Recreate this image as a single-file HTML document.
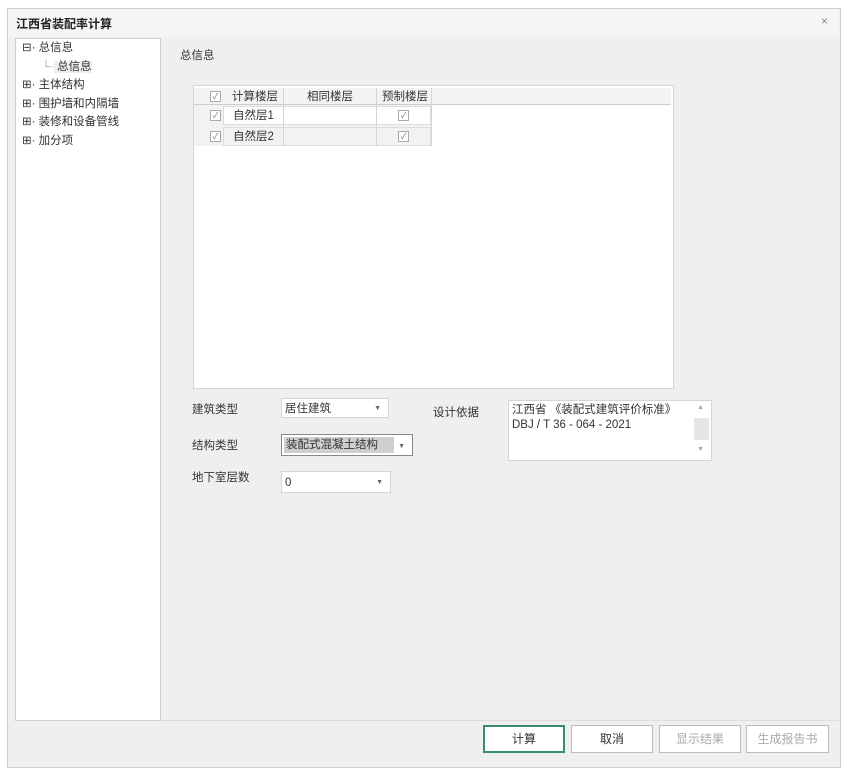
<!DOCTYPE html><html><head><meta charset="utf-8"><style>
body{margin:0;width:847px;height:774px;background:#fff;font-family:"Liberation Sans","Noto Sans CJK SC",sans-serif;font-size:11.5px;color:#333;position:relative;overflow:hidden}
.a{position:absolute}
.win{left:7px;top:8px;width:832px;height:758px;border:1px solid #cfcfcf;background:#efefef}
.cb{display:inline-block;width:9px;height:9px;border:1px solid #aaa;background:#fff;position:absolute;font-size:8px;line-height:9px;text-align:center;color:#777}
.btn{top:725px;height:26px;border:1px solid #bdbdbd;background:#fff;text-align:center;line-height:26px;font-size:12px}
.sel{background:#fff;border:1px solid #d5d5d5;height:20px;line-height:20px;padding-left:3px;box-sizing:border-box}
.arr{position:absolute;right:7px;top:0;font-size:7px;color:#666}
</style></head><body>
<div class="a win"></div>
<div class="a" style="left:8px;top:9px;width:831px;height:28px;background:#f5f5f5"></div>
<div class="a" style="left:16px;top:15px;font-weight:bold;font-size:12px;color:#222">江西省装配率计算</div>
<div class="a" style="left:821px;top:14px;color:#888;font-size:12px">×</div>
<div class="a" style="left:15px;top:38px;width:144px;height:681px;background:#fff;border:1px solid #d0d0d0"></div>
<div class="a" style="left:22px;top:39px;line-height:18.5px">
<div>⊟· 总信息</div><div style="padding-left:20px"><span style="color:#aaa">└·</span><span style="background:#eee"> 总信息</span></div>
<div>⊞· 主体结构</div><div>⊞· 围护墙和内隔墙</div><div>⊞· 装修和设备管线</div><div>⊞· 加分项</div></div>
<div class="a" style="left:180px;top:47px">总信息</div>
<div class="a" style="left:193px;top:85px;width:479px;height:302px;background:#fff;border:1px solid #d5d5d5"></div>
<div class="a" style="left:194px;top:88px;width:477px;height:16px;background:#f3f3f3;border-bottom:1px solid #ccc"></div>
<div class="a" style="left:194px;top:105px;width:237px;height:41px;background:#f2f2f2"></div>
<div class="a" style="left:223px;top:106px;width:208px;height:19px;background:#fff;border:1px solid #ddd;box-sizing:border-box"></div>
<div class="a" style="left:223px;top:127px;width:208px;height:19px;background:#f2f2f2;border:1px solid #ddd;box-sizing:border-box"></div>
<div class="a" style="left:283px;top:88px;width:1px;height:58px;background:#d5d5d5"></div>
<div class="a" style="left:376px;top:88px;width:1px;height:58px;background:#d5d5d5"></div>
<div class="a" style="left:431px;top:88px;width:1px;height:58px;background:#d5d5d5"></div>
<span class="cb" style="left:210px;top:91px">✓</span>
<div class="a" style="left:232px;top:88px">计算楼层</div>
<div class="a" style="left:307px;top:88px">相同楼层</div>
<div class="a" style="left:382px;top:88px">预制楼层</div>
<span class="cb" style="left:210px;top:110px">✓</span><div class="a" style="left:233px;top:107px">自然层1</div><span class="cb" style="left:398px;top:110px">✓</span>
<span class="cb" style="left:210px;top:131px">✓</span><div class="a" style="left:233px;top:128px">自然层2</div><span class="cb" style="left:398px;top:131px">✓</span>
<div class="a" style="left:192px;top:401px">建筑类型</div>
<div class="a sel" style="left:281px;top:398px;width:108px">居住建筑<span class="arr">▼</span></div>
<div class="a" style="left:192px;top:437px">结构类型</div>
<div class="a sel" style="left:281px;top:434px;width:132px;height:22px;border-color:#888;padding:2px"><div style="background:#cfcfcf;width:108px;height:16px;line-height:16px;padding-left:2px">装配式混凝土结构</div><span class="arr" style="top:2px">▼</span></div>
<div class="a" style="left:192px;top:469px">地下室层数</div>
<div class="a sel" style="left:281px;top:471px;width:110px;height:22px;line-height:22px">0<span class="arr">▼</span></div>
<div class="a" style="left:433px;top:404px">设计依据</div>
<div class="a" style="left:508px;top:400px;width:202px;height:59px;background:#fff;border:1px solid #d5d5d5"></div>
<div class="a" style="left:512px;top:403px;line-height:15px">江西省 《装配式建筑评价标准》<br>DBJ / T 36 - 064 - 2021</div>
<div class="a" style="left:694px;top:418px;width:15px;height:22px;background:#e6e6e6"></div>
<div class="a" style="left:697px;top:404px;font-size:7px;color:#aaa">▲</div>
<div class="a" style="left:697px;top:446px;font-size:7px;color:#aaa">▼</div>
<div class="a" style="left:160px;top:720px;width:679px;height:1px;background:#dcdcdc"></div>
<div class="a btn" style="left:483px;width:78px;border:2px solid #3a8a78;height:24px;line-height:24px">计算</div>
<div class="a btn" style="left:571px;width:80px">取消</div>
<div class="a btn" style="left:659px;width:80px;color:#aaa">显示结果</div>
<div class="a btn" style="left:746px;width:81px;color:#aaa">生成报告书</div>
</body></html>
